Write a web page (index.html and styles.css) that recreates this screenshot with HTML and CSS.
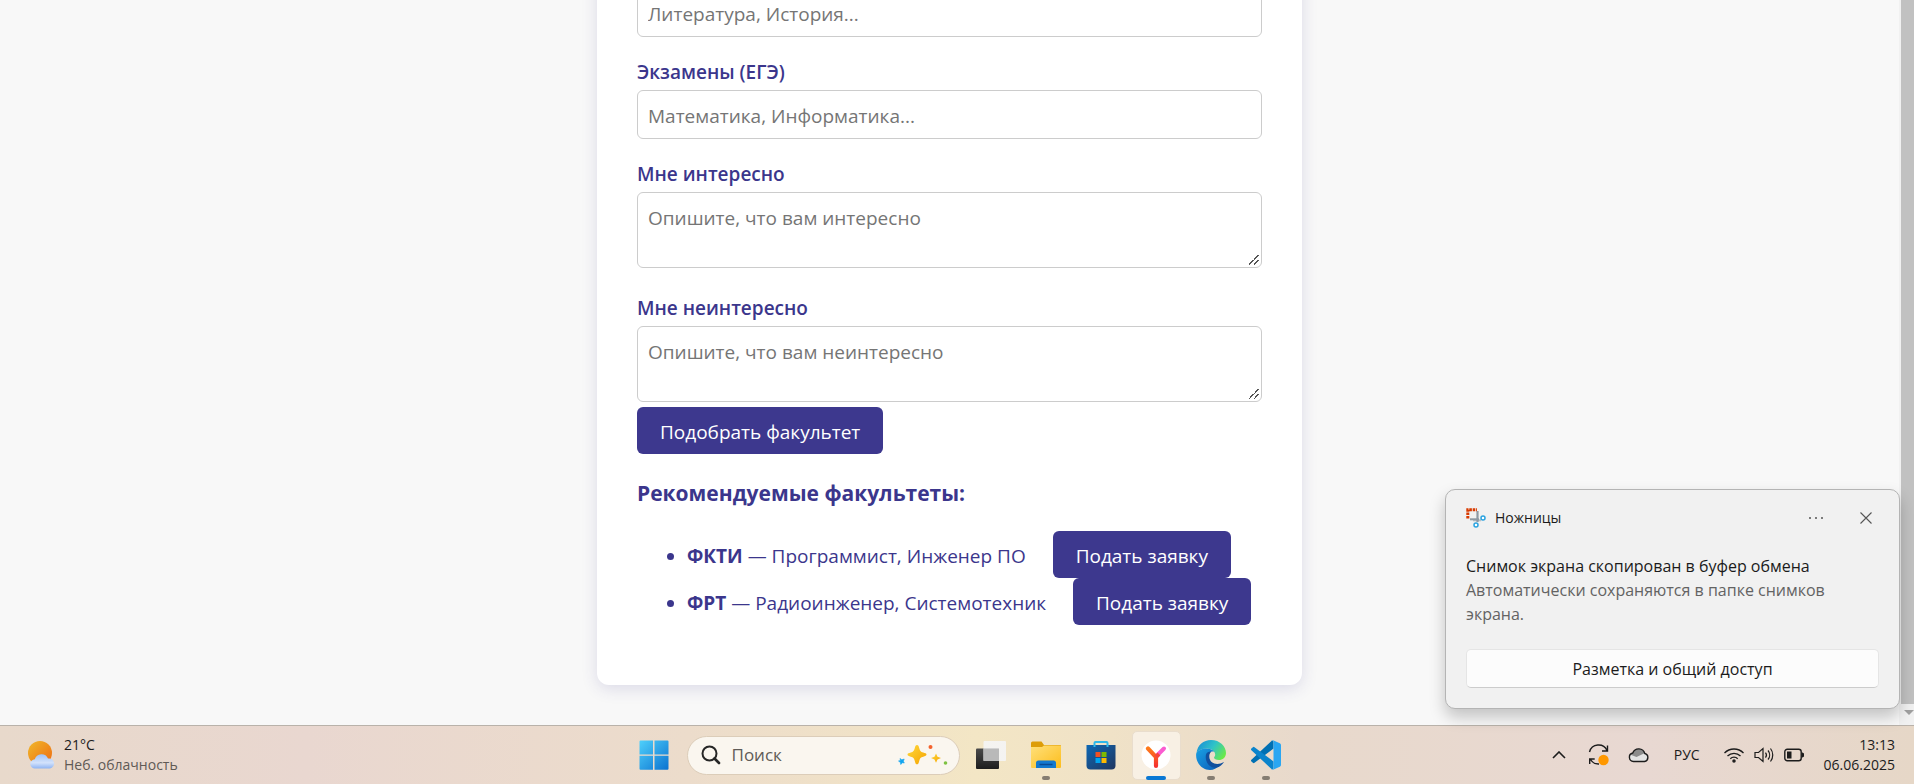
FILE: index.html
```html
<!DOCTYPE html>
<html lang="ru">
<head>
<meta charset="utf-8">
<title>Подбор факультета</title>
<meta name="viewport" content="width=device-width, initial-scale=1">
<link rel="stylesheet" href="styles.css">
</head>
<body>
<div class="screen">
  <div class="browser">
    <main class="page">
      <div class="card">
        <form class="form">
          <input class="control" type="text" aria-label="Любимые предметы" placeholder="Литература, История...">
          <label class="label" for="exams">Экзамены (ЕГЭ)</label>
          <input class="control" id="exams" type="text" placeholder="Математика, Информатика...">
          <label class="label" for="likes">Мне интересно</label>
          <textarea class="control control-area" id="likes" rows="2" placeholder="Опишите, что вам интересно"></textarea>
          <label class="label" for="dislikes">Мне неинтересно</label>
          <textarea class="control control-area" id="dislikes" rows="2" placeholder="Опишите, что вам неинтересно"></textarea>
          <button class="btn" type="button">Подобрать факультет</button>
        </form>
        <h3 class="subtitle">Рекомендуемые факультеты:</h3>
        <ul class="results">
          <li><strong>ФКТИ</strong> — Программист, Инженер ПО <button class="btn btn-apply" type="button">Подать заявку</button></li>
          <li><strong>ФРТ</strong> — Радиоинженер, Системотехник <button class="btn btn-apply" type="button">Подать заявку</button></li>
        </ul>
      </div>
    </main>
    <div class="scrollbar" aria-hidden="true">
      <div class="scroll-thumb"></div>
      <svg class="scroll-arrow" width="10" height="6" viewBox="0 0 10 6"><path d="M0 0h10L5 5z" fill="#a0a0a0"/></svg>
    </div>
  </div>

  <section class="toast">
    <header class="toast-head">
      <svg width="20" height="20" viewBox="0 0 20 20">
        <path d="M7 12.300h8" fill="none" stroke="#b9c0c6" stroke-width="2"/>
        <path d="M11.500 3v11" fill="none" stroke="#8e99a3" stroke-width="2.200"/>
        <path d="M4 11.300h9" fill="none" stroke="#8e99a3" stroke-width="2"/>
        <path d="M1.800 10.500V1.800H11" fill="none" stroke="#d83b01" stroke-width="3" stroke-dasharray="2.600 .8"/>
        <circle cx="17" cy="10" r="2" fill="#fff" stroke="#2ba3e0" stroke-width="1.500"/>
        <circle cx="10" cy="17" r="2" fill="#fff" stroke="#2ba3e0" stroke-width="1.500"/>
      </svg>
      <span class="toast-app">Ножницы</span>
      <button class="icon-btn" type="button" aria-label="Ещё"><svg width="16" height="4" viewBox="0 0 16 4" fill="#555"><circle cx="2" cy="2" r="1"/><circle cx="8" cy="2" r="1"/><circle cx="14" cy="2" r="1"/></svg></button>
      <button class="icon-btn" type="button" aria-label="Закрыть"><svg width="12" height="12" viewBox="0 0 12 12"><path d="M.5.5l11 11M11.500.5l-11 11" stroke="#555" stroke-width="1.100"/></svg></button>
    </header>
    <p class="toast-title">Снимок экрана скопирован в буфер обмена</p>
    <p class="toast-text">Автоматически сохраняются в папке снимков экрана.</p>
    <button class="toast-action" type="button">Разметка и общий доступ</button>
  </section>

  <footer class="taskbar">
    <button class="weather" type="button">
      <svg width="28" height="28" viewBox="0 0 28 28">
        <defs>
          <linearGradient id="sun" x1="0" y1="0" x2="1" y2="1"><stop offset="0" stop-color="#f0b92c"/><stop offset="1" stop-color="#ee6a10"/></linearGradient>
          <linearGradient id="cld" x1="0" y1="0" x2="0" y2="1"><stop offset="0" stop-color="#9fc2f6"/><stop offset=".6" stop-color="#d3e2fb"/><stop offset="1" stop-color="#8fb4f2"/></linearGradient>
        </defs>
        <circle cx="12" cy="12" r="12" fill="url(#sun)"/>
        <path d="M7 27.500a4.600 4.600 0 0 1-.2-9.200A7 7 0 0 1 20 17.500a5 5 0 0 1 2 10z" fill="url(#cld)"/>
      </svg>
      <span class="weather-text"><span>21°C</span><span class="muted">Неб. облачность</span></span>
    </button>

    <nav class="apps">
      <button class="app" type="button" aria-label="Пуск">
        <svg width="30" height="30" viewBox="0 0 30 30">
          <defs><linearGradient id="win" x1="0" y1="0" x2="1" y2="1"><stop offset="0" stop-color="#4fd0fb"/><stop offset="1" stop-color="#0a72d0"/></linearGradient></defs>
          <path d="M1.500.5H14v14H.5v-13a1 1 0 0 1 1-1zM15.500.5h13a1 1 0 0 1 1 1v13h-14zM.5 15.800H14v14H1.500a1 1 0 0 1-1-1zM15.500 15.800h14v13a1 1 0 0 1-1 1h-13z" fill="url(#win)"/>
        </svg>
      </button>
      <label class="search">
        <svg width="20" height="20" viewBox="0 0 20 20" fill="none" stroke="#262626"><circle cx="8.500" cy="8.500" r="7" stroke-width="2"/><path d="M13.500 13.500l4.500 4.500" stroke-width="2.600" stroke-linecap="round"/></svg>
        <input class="search-input" type="text" placeholder="Поиск" aria-label="Поиск">
        <svg width="52" height="22" viewBox="0 0 52 22">
          <defs><linearGradient id="star" x1="0" y1="0" x2="1" y2="1"><stop offset="0" stop-color="#ffd93b"/><stop offset="1" stop-color="#f5a300"/></linearGradient></defs>
          <path d="M20 1c1.200 0 1.800 1 2.200 3 .8 3 1.400 3.800 4 4.600 2 .6 3.300 1 3.300 2s-1.300 1.500-3.300 2.100c-2.600.7-3.200 1.500-4 4.400-.4 2-1 3.200-2.200 3.200s-1.800-1.200-2.200-3.200c-.8-2.900-1.400-3.700-4-4.400-2-.6-3.300-1.100-3.300-2.100s1.300-1.400 3.300-2c2.600-.8 3.200-1.600 4-4.600.4-2 1-3 2.200-3z" fill="url(#star)"/>
          <path d="M39 9.500l1.500 3.200 3.500 1.300-3.500 1.400L39 18.800l-1.500-3.400L34 14l3.500-1.300z" fill="url(#star)"/>
          <path d="M3 14.500l1.800 1.300 2.400-.8-.8 2.200.9 1.800-2-.3L3.800 20.500l-.5-2.200L1.500 17l2-.6z" fill="#12a5f0" stroke="#12a5f0" stroke-width=".6"/>
          <circle cx="33.500" cy="3" r="2" fill="#f4622c"/><circle cx="48.500" cy="19" r="1.800" fill="#7ec242"/>
        </svg>
      </label>
      <button class="app" type="button" aria-label="Представление задач">
        <svg width="30" height="30" viewBox="0 0 30 30">
          <defs><linearGradient id="tv" x1="0" y1="0" x2="0" y2="1"><stop offset="0" stop-color="#4a4a4a"/><stop offset="1" stop-color="#1d1d1d"/></linearGradient></defs>
          <rect y="8.500" width="23" height="20.500" rx="1" fill="url(#tv)"/><rect x="7.500" y="1" width="22.500" height="20" rx="1" fill="#f4f4f4" opacity=".93"/><path d="M7.500 8.500H23V21H7.500z" fill="#b9b9b9"/>
        </svg>
      </button>
      <button class="app open" type="button" aria-label="Проводник">
        <svg width="30" height="30" viewBox="0 0 30 30">
          <defs><linearGradient id="fold" x1="0" y1="0" x2="1" y2="1"><stop offset="0" stop-color="#ffe07a"/><stop offset="1" stop-color="#fdbd1c"/></linearGradient></defs>
          <path d="M0 3a1.500 1.500 0 0 1 1.500-1.500h9L13 5h16a1 1 0 0 1 1 1v4H0z" fill="#dd9d08"/>
          <path d="M0 7h11l2-1.500h16.500L30 6v21a1 1 0 0 1-1 1H1a1 1 0 0 1-1-1z" fill="url(#fold)"/>
          <path d="M5 28v-5a2.500 2.500 0 0 1 2.500-2.500h15A2.500 2.500 0 0 1 25 23v5z" fill="#1379cf"/><path d="M8.500 24.500h13" stroke="#0a4b94" stroke-width="1.500"/>
        </svg>
      </button>
      <button class="app" type="button" aria-label="Microsoft Store">
        <svg width="30" height="30" viewBox="0 0 30 30">
          <defs><linearGradient id="store" x1="0" y1="0" x2="1" y2="1"><stop offset="0" stop-color="#0e68b4"/><stop offset="1" stop-color="#20365f"/></linearGradient></defs>
          <path d="M8.500 7V3a1 1 0 0 1 1-1h11a1 1 0 0 1 1 1v4" fill="none" stroke="#2fb8ea" stroke-width="2"/>
          <path d="M.5 5h29v20.500A4 4 0 0 1 25.500 29.500h-21a4 4 0 0 1-4-4z" fill="url(#store)"/><path d="M7.500 5h2v2h-2zM20.500 5h2v2h-2z" fill="#2fb8ea"/>
          <path d="M9.500 12h5v5h-5z" fill="#f25022"/><path d="M15.500 12h5v5h-5z" fill="#7fba00"/><path d="M9.500 18h5v5h-5z" fill="#00a4ef"/><path d="M15.500 18h5v5h-5z" fill="#ffb900"/>
        </svg>
      </button>
      <button class="app open active" type="button" aria-label="Яндекс Браузер">
        <svg width="30" height="30" viewBox="0 0 30 30">
          <defs><linearGradient id="ya" x1="0" y1="0" x2="0" y2="1"><stop offset="0" stop-color="#ff7a1a"/><stop offset="1" stop-color="#f5322e"/></linearGradient></defs>
          <circle cx="15" cy="15" r="14.500" fill="#fff"/>
          <path d="M15.500 16L23 8.500" stroke="#fa5cd0" stroke-width="4" stroke-linecap="round"/>
          <path d="M7 8.500l8 8.500v9" fill="none" stroke="url(#ya)" stroke-width="4.200" stroke-linecap="round"/><path d="M15 17l3-3" stroke="#f6463c" stroke-width="4"/>
        </svg>
      </button>
      <button class="app open" type="button" aria-label="Microsoft Edge">
        <svg width="30" height="30" viewBox="0 0 30 30">
          <defs>
            <linearGradient id="e1" x1="0" y1=".2" x2="1" y2=".7"><stop offset="0" stop-color="#1b8fd6"/><stop offset=".5" stop-color="#2fc3c8"/><stop offset="1" stop-color="#6bea45"/></linearGradient>
            <linearGradient id="e2" x1="0" y1="0" x2="1" y2="1"><stop offset="0" stop-color="#1aa1e4"/><stop offset="1" stop-color="#0a5cb8"/></linearGradient>
          </defs>
          <path d="M.5 13C1.500 5 7.500 0 15 0c9 0 15 6.500 15 13 0 4.500-3.500 7-7 7-3 0-5-1-5-2.200 0-.8 1.200-1.300 1.200-3.300 0-3-3.500-6-8.200-6C6.500 8.500 2.500 10 .5 13z" fill="url(#e1)"/>
          <path d="M.2 13.500C2 10 6.500 8.400 10.500 8.500c3.500 0 6.500 1.500 8 3.500-2.500-1.500-6.500.5-6.500 5 0 6 5.500 9.500 11.500 8-2.500 3.500-6 5-9.500 5C6 30-.8 22.500.2 13.500z" fill="url(#e2)"/>
          <path d="M10 14.500c-1.500 8 4 13.500 10 13.300 4-.8 6.500-3.300 8-5.800-8 4.500-16 .5-14.500-7.500.3-1.300 1-2.300 2-3-2.500-.2-5 1-5.500 3z" fill="#114f9e"/>
        </svg>
      </button>
      <button class="app open" type="button" aria-label="Visual Studio Code">
        <svg width="30" height="30" viewBox="0 0 30 30">
          <path d="M22.500 8.500L3.500 22.800a1.200 1.200 0 0 1-1.600 0L.4 21.400a1.200 1.200 0 0 1 0-1.700L21 .6l1.500 1z" fill="#0070b3"/>
          <path d="M22.500 21.500L3.500 7.200a1.200 1.200 0 0 0-1.600 0L.4 8.600a1.200 1.200 0 0 0 0 1.700L21 29.400l1.500-1z" fill="#0b84cc"/>
          <path d="M22 .2l6.800 3a2 2 0 0 1 1.200 1.800v20a2 2 0 0 1-1.200 1.800l-6.800 3c-.8.200-1.300 0-1.700-.5.9.7 2.200.2 2.200-1V1.700c0-1.200-1.300-1.700-2.200-1 .4-.5.900-.7 1.700-.5z" fill="#2aa6f2"/>
        </svg>
      </button>
    </nav>

    <div class="tray">
      <button class="tray-btn" type="button" aria-label="Скрытые значки"><svg width="14" height="8" viewBox="0 0 14 8"><path d="M1 7l6-6 6 6" fill="none" stroke="#1c1c1c" stroke-width="1.600"/></svg></button>
      <button class="tray-btn tray-sync" type="button" aria-label="Обновления"><svg width="22" height="22" viewBox="0 0 22 22" fill="none" stroke="#1c1c1c" stroke-width="1.400"><path d="M1.500 8A9.300 9.300 0 0 1 19 6.500M19.500 1.500V7H14M1.700 20v-5h5M2.500 15.500A9.300 9.300 0 0 0 11 20"/><circle cx="15.500" cy="16" r="5.200" fill="#ff9800" stroke="none"/></svg></button>
      <button class="tray-btn tray-cloud" type="button" aria-label="OneDrive"><svg width="22" height="16" viewBox="0 0 22 16"><path d="M5.500 14.500a4.300 4.300 0 0 1-.7-8.500A6.300 6.300 0 0 1 16.800 6.500a4.100 4.100 0 0 1-.3 8z" fill="#e4e4e4"/><path d="M2 7.500a5 5 0 0 1 3-1.600C7 .5 14.500.2 16.500 6.300L8.500 10z" fill="#8c8c8c"/><path d="M5.500 14.500a4.300 4.300 0 0 1-.7-8.500A6.300 6.300 0 0 1 16.800 6.500a4.100 4.100 0 0 1-.3 8z" fill="none" stroke="#1c1c1c" stroke-width="1.400"/></svg></button>
      <button class="tray-btn tray-lang" type="button">РУС</button>
      <button class="tray-btn tray-status" type="button" aria-label="Сеть, звук, батарея">
        <svg width="20" height="16" viewBox="0 0 20 16" fill="none" stroke="#1c1c1c" stroke-width="1.300"><path d="M.5 6a13.300 13.300 0 0 1 19 0M3.500 9a9.200 9.200 0 0 1 13 0M6.300 11.700a5.200 5.200 0 0 1 7.400 0"/><circle cx="10" cy="14" r="1.100" fill="#1c1c1c"/></svg>
        <svg width="20" height="16" viewBox="0 0 20 16" fill="none" stroke="#1c1c1c" stroke-width="1.200"><path d="M1 5.500h3.500L9 1.500v13l-4.500-4H1zM11.500 5.500a4 4 0 0 1 0 5M14 3.500a7 7 0 0 1 0 9M16.500 1.500a10.500 10.500 0 0 1 0 13"/></svg>
        <svg width="20" height="14" viewBox="0 0 20 14"><rect x=".8" y="1.300" width="16.400" height="11.400" rx="2.500" fill="none" stroke="#1c1c1c" stroke-width="1.400"/><path d="M3 3.500h4.500v7H3zM17.500 4.500h1l1.500 1v3l-1.500 1h-1z" fill="#1c1c1c"/></svg>
      </button>
      <button class="tray-btn clock" type="button"><time>13:13</time><time>06.06.2025</time></button>
    </div>
  </footer>
</div>
</body>
</html>
```
FILE: styles.css
```css
* {
  box-sizing: border-box;
}

body {
  margin: 0;
  font-family: "Open Sans", "Noto Sans", sans-serif;
  font-size: 19px;
  color: #3b368c;
}

button,
input,
textarea {
  font: inherit;
}

button {
  border: 0;
  padding: 0;
  background: none;
  color: inherit;
}

.screen {
  position: relative;
  display: flex;
  flex-direction: column;
  height: 100vh;
  overflow: hidden;
  background: #f8f8f8;
}

/* Browser viewport, scrolled to the end of the form */
.browser {
  flex: 1;
  min-height: 0;
  display: flex;
}

.page {
  flex: 1;
  display: flex;
  flex-direction: column;
  justify-content: flex-end;
  align-items: center;
  padding-bottom: 40px;
  overflow: hidden;
}

.card {
  width: 100%;
  max-width: 705px;
  flex: none;
  padding: 40px;
  background: #fff;
  border-radius: 12px;
  box-shadow: 0 4px 16px rgba(59, 54, 140, 0.15);
}

.form {
  display: flex;
  flex-direction: column;
  align-items: flex-start;
}

.label {
  margin: 21px 0 4px;
  font-weight: 600;
  line-height: 28px;
}

.control {
  width: 100%;
  padding: 12px 10px 9px;
  border: 1px solid #ccc;
  border-radius: 6px;
  background: #fff;
  line-height: 26px;
}

input.control {
  height: 49px;
}

.control::placeholder {
  color: #757575;
}

.control-area {
  display: block;
  height: 76px;
  margin-bottom: 5px;
  overflow: hidden;
  resize: vertical;
}

.control-area::-webkit-resizer {
  background: linear-gradient(135deg, transparent 45%, #555 45%, #555 54%, transparent 54%, transparent 70%, #555 70%, #555 79%, transparent 79%) 3px 3px / 10px 10px no-repeat;
}

.btn {
  padding: 12px 23px 9px;
  border-radius: 6px;
  background: #3d388e;
  color: #fff;
  line-height: 26px;
}

.btn-apply {
  margin-left: 22px;
}

.subtitle {
  margin: 23px 0 22px;
  font-size: 21px;
  line-height: 32px;
}

.results {
  margin: 0 0 20px;
  padding-left: 50px;
  white-space: nowrap;
}

.scrollbar {
  display: flex;
  flex-direction: column;
  align-items: flex-end;
  width: 15px;
  padding-bottom: 9px;
  background: #f1f1f1;
}

.scroll-thumb {
  flex: 1;
  width: 13px;
  background: #c1c1c1;
}

.scroll-arrow {
  margin: 6px 0 0;
}

/* Notification */
.toast {
  position: absolute;
  right: 14px;
  bottom: 75px;
  width: 455px;
  padding: 8px 20px 20px;
  border: 1px solid #b4b4b4;
  border-radius: 10px;
  background: #f1f1f1;
  box-shadow: 0 8px 16px rgba(0, 0, 0, 0.22);
  color: #1b1b1b;
  font-size: 16px;
  line-height: 24px;
}

.toast p {
  margin: 0;
}

.toast-head {
  display: flex;
  align-items: center;
  height: 40px;
  margin-bottom: 16px;
}

.toast-app {
  margin: 0 auto 0 9px;
  font-size: 14px;
}

.icon-btn {
  display: grid;
  place-items: center;
  width: 26px;
  height: 26px;
  margin-left: 24px;
}

.toast-text {
  color: #636363;
}

.toast-action {
  display: block;
  width: 100%;
  height: 39px;
  margin-top: 23px;
  border: 1px solid #e5e5e5;
  border-bottom-color: #ccc;
  border-radius: 5px;
  background: #fcfcfc;
}

/* Taskbar */
.taskbar {
  display: grid;
  grid-template-columns: 1fr auto 1fr;
  align-items: center;
  height: 59px;
  padding: 0 19px 0 25px;
  border-top: 1px solid #b9b2aa;
  background: linear-gradient(90deg, #e8d9cb, #e9d7d0 16%, #ecdccb 36%, #f3e6c5 51%, #f0e2c7 58%, #e8d9cc 68%, #e8d8d2 86%, #e6d7c7);
  color: #1c1c1c;
  font-size: 14px;
  line-height: 20px;
}

.weather {
  justify-self: start;
  display: flex;
  align-items: center;
  gap: 8px;
  padding-left: 3px;
  text-align: left;
}

.weather-text,
.clock {
  display: flex;
  flex-direction: column;
}

.muted {
  color: #5f5a55;
}

.apps {
  display: flex;
  align-items: center;
}

.app {
  position: relative;
  display: grid;
  place-items: center;
  width: 49px;
  height: 49px;
  margin: 0 3px;
  border: 1px solid transparent;
  border-radius: 5px;
}

.app.active {
  border-color: #e9ddcd;
  background: #f8f0e4;
}

.app.open::after {
  content: "";
  position: absolute;
  bottom: -1px;
  left: 50%;
  width: 8px;
  height: 4px;
  margin-left: -4px;
  border-radius: 2px;
  background: #857d72;
}

.app.active::after {
  width: 20px;
  margin-left: -10px;
  background: #0a78d4;
}

.search {
  display: flex;
  align-items: center;
  width: 273px;
  height: 39px;
  margin: 0 4px 0 5px;
  padding: 0 10px 0 13px;
  border: 1px solid #dccdb9;
  border-radius: 20px;
  background: #faf6ef;
}

.search-input {
  flex: 1;
  min-width: 0;
  margin-left: 11px;
  padding: 0;
  border: 0;
  outline: 0;
  background: none;
  font-size: 17px;
}

.search-input::placeholder {
  color: #5f5b57;
}

.tray {
  justify-self: end;
  display: flex;
  align-items: center;
}

.tray-btn {
  display: flex;
  align-items: center;
}

.tray-sync {
  margin-left: 22px;
}

.tray-cloud {
  margin-left: 18px;
}

.tray-lang {
  margin-left: 24px;
}

.tray-status {
  gap: 10px;
  margin-left: 24px;
}

.clock {
  align-items: flex-end;
  margin-left: 20px;
}
```
